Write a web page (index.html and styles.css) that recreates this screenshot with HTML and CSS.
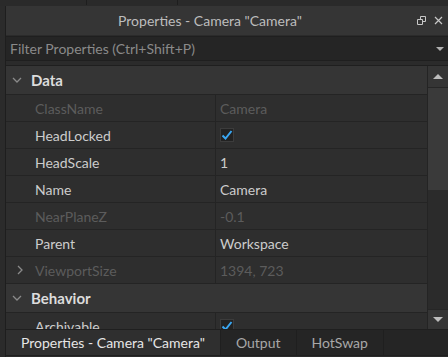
FILE: index.html
```html
<!DOCTYPE html>
<html lang="en">
<head>
    <meta charset="UTF-8">
    <title>Properties</title>
    <link rel="stylesheet" href="styles.css">
</head>
<body>
    <div class="top-strip">
        <div class="strip-seg seg-a"></div>
        <div class="strip-seg seg-b"></div>
        <div class="strip-seg seg-c"></div>
    </div>
    <div class="window">
        <div class="title-bar">
            <span class="title">Properties - Camera "Camera"</span>
            <div class="title-icons">
                <svg width="9" height="9" viewBox="0 0 9 9"><path d="M0.5 3.5h5v5h-5z M3.5 3.5v-3h5v5h-3" fill="none" stroke="#c8c8c8" stroke-width="1"/></svg>
                <svg width="9" height="9" viewBox="0 0 9 9"><path d="M1 1l7 7M8 1l-7 7" stroke="#c8c8c8" stroke-width="1.2"/></svg>
            </div>
        </div>
        <div class="filter">
            <span class="filter-text">Filter Properties (Ctrl+Shift+P)</span>
            <span class="filter-arrow"></span>
        </div>
        <div class="list-wrap">
            <div class="list">
                <div class="group">
                    <svg class="chev" width="10" height="6" viewBox="0 0 10 6"><path d="M1 1l4 4 4-4" fill="none" stroke="#8a8a8a" stroke-width="1.3"/></svg>
                    <span>Data</span>
                </div>
                <div class="row disabled"><div class="name">ClassName</div><div class="value">Camera</div></div>
                <div class="row"><div class="name">HeadLocked</div><div class="value"><span class="check"><svg width="12" height="10" viewBox="0 0 12 10"><path d="M1.5 5.5l3 3 6-7.5" fill="none" stroke="#3aa7f2" stroke-width="2"/></svg></span></div></div>
                <div class="row"><div class="name">HeadScale</div><div class="value">1</div></div>
                <div class="row"><div class="name">Name</div><div class="value">Camera</div></div>
                <div class="row disabled"><div class="name">NearPlaneZ</div><div class="value">-0.1</div></div>
                <div class="row"><div class="name">Parent</div><div class="value">Workspace</div></div>
                <div class="row disabled">
                    <div class="name">
                        <svg class="expand" width="6" height="10" viewBox="0 0 6 10"><path d="M1 1l4 4-4 4" fill="none" stroke="#8a8a8a" stroke-width="1.3"/></svg>
                        ViewportSize
                    </div>
                    <div class="value">1394, 723</div>
                </div>
                <div class="group">
                    <svg class="chev" width="10" height="6" viewBox="0 0 10 6"><path d="M1 1l4 4 4-4" fill="none" stroke="#8a8a8a" stroke-width="1.3"/></svg>
                    <span>Behavior</span>
                </div>
                <div class="row"><div class="name">Archivable</div><div class="value"><span class="check"><svg width="12" height="10" viewBox="0 0 12 10"><path d="M1.5 5.5l3 3 6-7.5" fill="none" stroke="#3aa7f2" stroke-width="2"/></svg></span></div></div>
            </div>
            <div class="scrollbar">
                <div class="scroll-btn"><span class="arrow-up"></span></div>
                <div class="thumb"></div>
                <div class="track"></div>
                <div class="scroll-btn"><span class="arrow-down"></span></div>
            </div>
        </div>
        <div class="tabs">
            <div class="tab active">Properties - Camera "Camera"</div>
            <div class="tab">Output</div>
            <div class="tab">HotSwap</div>
        </div>
    </div>
</body>
</html>
```

FILE: styles.css
```css
body {
    margin: 0;
    width: 448px;
    height: 357px;
    overflow: hidden;
    background-color: #2b2b2b;
    font-family: Lato, "Noto Sans", sans-serif;
    font-size: 14px;
    color: #cccccc;
}
.top-strip {
    display: flex;
    height: 6px;
    background-color: #2a2a2a;
}
.strip-seg {
    height: 5px;
    border-right: 1px solid #1e1e1e;
}
.seg-a { width: 86px; }
.seg-b { width: 90px; }
.seg-c { flex: 1; border-right: none; }
.window {
    margin-left: 5px;
    border-left: 1px solid #1e1e1e;
    height: 351px;
    display: flex;
    flex-direction: column;
}
.title-bar {
    height: 29px;
    background-color: #353535;
    display: flex;
    align-items: center;
    justify-content: center;
    padding-right: 34px;
    position: relative;
    border-bottom: 1px solid #2b2b2b;
}
.title {
    color: #bdbdbd;
}
.title-icons {
    position: absolute;
    right: 5px;
    top: 10px;
    display: flex;
    gap: 8px;
}
.filter {
    height: 23px;
    background-color: #252525;
    border-top: 1px solid #1f1f1f;
    border-bottom: 1px solid #1f1f1f;
    display: flex;
    align-items: center;
    justify-content: space-between;
    padding: 0 4px 0 4px;
}
.filter-text {
    color: #8a8a8a;
}
.filter-arrow {
    width: 0;
    height: 0;
    border-left: 4px solid transparent;
    border-right: 4px solid transparent;
    border-top: 4px solid #b0b0b0;
}
.list-wrap {
    margin-top: 4px;
    height: 263px;
    display: flex;
    overflow: hidden;
    border-top: 1px solid #1f1f1f;
}
.list {
    flex: 1;
    overflow: hidden;
}
.group {
    height: 28px;
    background-color: #353535;
    border-bottom: 1px solid #242424;
    display: flex;
    align-items: center;
    font-weight: bold;
    font-size: 15px;
    color: #dcdcdc;
}
.chev {
    margin: 0 9px 0 6px;
}
.row {
    height: 26px;
    display: flex;
    border-bottom: 1px solid #242424;
    background-color: #2e2e2e;
}
.name {
    width: 180px;
    padding-left: 29px;
    border-right: 1px solid #242424;
    display: flex;
    align-items: center;
    position: relative;
}
.expand {
    position: absolute;
    left: 11px;
    top: 8px;
}
.value {
    flex: 1;
    padding-left: 4px;
    display: flex;
    align-items: center;
}
.disabled {
    color: #5c5c5c;
}
.check {
    width: 12px;
    height: 12px;
    background-color: #222222;
    border: 1px solid #3c3c3c;
    display: flex;
    align-items: center;
    justify-content: center;
}
.scrollbar {
    width: 20px;
    border-left: 1px solid #242424;
    display: flex;
    flex-direction: column;
    background-color: #2b2b2b;
}
.scroll-btn {
    height: 21px;
    background-color: #353535;
    display: flex;
    align-items: center;
    justify-content: center;
    border-bottom: 1px solid #262626;
}
.scroll-btn:last-child {
    border-bottom: none;
    border-top: 1px solid #262626;
    height: 19px;
}
.arrow-up, .arrow-down {
    width: 0;
    height: 0;
    border-left: 5px solid transparent;
    border-right: 5px solid transparent;
}
.arrow-up { border-bottom: 5px solid #bdbdbd; }
.arrow-down { border-top: 5px solid #bdbdbd; }
.thumb {
    height: 102px;
    background-color: #3a3a3a;
}
.track {
    flex: 1;
}
.tabs {
    height: 25px;
    display: flex;
    background-color: #252525;
    border-top: 1px solid #1f1f1f;
    border-bottom: 1px solid #1f1f1f;
}
.tab {
    padding: 0 15px;
    display: flex;
    align-items: center;
    color: #a8a8a8;
    border-right: 1px solid #1f1f1f;
}
.tab.active {
    background-color: #2f2f2f;
    color: #e6e6e6;
}
```
